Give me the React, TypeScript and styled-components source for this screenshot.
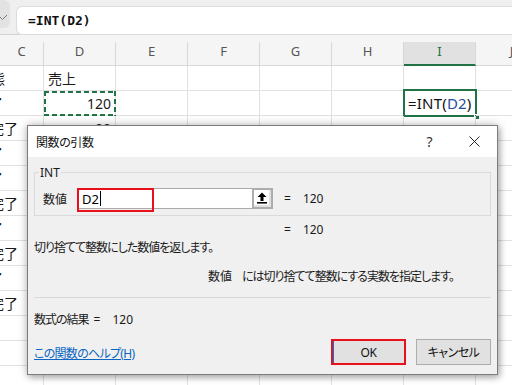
import React from "react";
import styled, { createGlobalStyle } from "styled-components";

const Global = createGlobalStyle`
  html, body { margin: 0; padding: 0; background: #fff; }
  body { width: 512px; height: 385px; overflow: hidden; }
  * { box-sizing: border-box; }
`;

const GREEN = "#217346";
const UI_FONT = `"Noto Sans", "Noto Sans CJK JP", sans-serif`;

const Screen = styled.div`
  position: relative;
  width: 512px;
  height: 385px;
  overflow: hidden;
  font-family: ${UI_FONT};
  font-feature-settings: "palt";
`;

const FormulaBar = styled.div`
  display: flex;
  gap: 6px;
  height: 35px;
  padding-top: 6px;
  background: #efefef;
  border-bottom: 1px solid #d4d4d4;
`;

const NameBox = styled.div`
  width: 10px;
  height: 28px;
  margin-top: -6px;
  padding-top: 6px;
  background: #e3e3e3;
  border-radius: 0 6px 6px 0;
  display: flex;
  align-items: center;
  overflow: hidden;
`;

const FormulaInput = styled.div`
  flex: 1;
  height: 29px;
  background: #fff;
  border: 1px solid #dcdcdc;
  border-right: none;
  border-radius: 6px 0 0 6px;
  display: flex;
  align-items: center;
  padding-left: 11px;
  font-family: "DejaVu Sans Mono", monospace;
  font-weight: bold;
  font-size: 13px;
  color: #111;
`;

const Grid = styled.div`
  display: grid;
  grid-template-columns: 44px repeat(7, 72px);
`;

const HeaderRow = styled(Grid)`
  height: 31px;
  background: #f5f5f5;
  align-items: end;
`;

const HeaderCell = styled.div<{ $active?: boolean }>`
  height: 24px;
  border-right: 1px solid #d8d8d8;
  border-bottom: ${(p) => (p.$active ? `2px solid ${GREEN}` : "1px solid #d8d8d8")};
  background: ${(p) => (p.$active ? "#e1e1e1" : "transparent")};
  color: ${(p) => (p.$active ? GREEN : "#555")};
  font-size: 13px;
  display: flex;
  justify-content: center;
  align-items: center;
  padding-bottom: 5px;
`;

const Row = styled(Grid)`
  height: 25px;
`;

const Cell = styled.div<{ $align?: "left" | "right"; $clip?: boolean }>`
  position: relative;
  height: 25px;
  border-right: 1px solid #e1e1e1;
  border-bottom: 1px solid #e1e1e1;
  font-size: 14px;
  color: #1a1a1a;
  display: flex;
  align-items: center;
  justify-content: ${(p) => (p.$align === "right" ? "flex-end" : "flex-start")};
  padding: ${(p) => (p.$clip ? "0" : "0 4px")};
  white-space: nowrap;
  overflow: ${(p) => (p.$clip ? "hidden" : "visible")};
`;

const Clipped = styled.span<{ $shift: number }>`
  margin-left: ${(p) => p.$shift}px;
  font-family: "Noto Sans CJK JP", sans-serif;
`;

const Marquee = styled.div`
  position: absolute;
  inset: 0 -1px -1px 0;
  pointer-events: none;
  background:
    repeating-linear-gradient(90deg, ${GREEN} 0 5px, transparent 5px 8px) top left / 100% 2px no-repeat,
    repeating-linear-gradient(90deg, ${GREEN} 0 5px, transparent 5px 8px) bottom left / 100% 2px no-repeat,
    repeating-linear-gradient(180deg, ${GREEN} 0 5px, transparent 5px 8px) top left / 2px 100% no-repeat,
    repeating-linear-gradient(180deg, ${GREEN} 0 5px, transparent 5px 8px) top right / 2px 100% no-repeat;
`;

const Selection = styled.div`
  position: absolute;
  top: -2px;
  left: -1px;
  right: -2px;
  bottom: -2px;
  border: 2px solid ${GREEN};
  pointer-events: none;
`;

const Handle = styled.span`
  position: absolute;
  right: -5px;
  bottom: -5px;
  width: 6px;
  height: 6px;
  background: ${GREEN};
  border: 1px solid #fff;
`;

const CellFormula = styled.span`
  font-size: 15px;
  letter-spacing: 0.2px;
  color: #111;
`;

const RefText = styled.span`
  color: #1f4e9c;
`;

/* ---------- Dialog ---------- */

const Dialog = styled.div`
  position: absolute;
  left: 27px;
  top: 125px;
  width: 471px;
  height: 250px;
  border: 1px solid #7c7c7c;
  background: #f0f0f0;
  box-shadow: 0 0 9px rgba(0, 0, 0, 0.28), 2px 3px 6px rgba(0, 0, 0, 0.2);
  display: flex;
  flex-direction: column;
  font-size: 12px;
  color: #1a1a1a;
`;

const TitleBar = styled.div`
  height: 31px;
  background: #fff;
  display: flex;
  align-items: center;
  padding-left: 8px;
`;

const Title = styled.div`
  flex: 1;
  font-size: 12px;
  letter-spacing: -0.4px;
  color: #111;
`;

const TitleButton = styled.div`
  width: 45px;
  height: 31px;
  display: flex;
  align-items: center;
  justify-content: center;
  font-size: 14px;
  color: #333;
`;

const Body = styled.div`
  flex: 1;
  display: flex;
  flex-direction: column;
  padding: 7px 6px 0 6px;
`;

const Group = styled.fieldset`
  margin: 0;
  border: 1px solid #dadada;
  padding: 7px 8px 6px 8px;
  min-width: 0;
`;

const Legend = styled.legend`
  padding: 0 1px;
  margin-left: -4px;
  font-size: 12px;
  line-height: 17px;
`;

const ArgRow = styled.div`
  display: flex;
  align-items: center;
  height: 21px;
`;

const ArgLabel = styled.div`
  width: 34px;
`;

const ArgField = styled.div`
  position: relative;
  width: 175px;
  height: 21px;
  background: #fff;
  border: 1px solid #a9a9a9;
  border-right: none;
  display: flex;
  align-items: center;
  padding-left: 4px;
  font-size: 13px;
  color: #000;
`;

const Caret = styled.span`
  display: inline-block;
  width: 1px;
  height: 15px;
  background: #000;
  margin-left: 1px;
`;

const Highlight = styled.div`
  position: absolute;
  left: -1px;
  top: -1px;
  width: 77px;
  height: 24px;
  border: 2px solid #e8101c;
  pointer-events: none;
`;

const RefButton = styled.div`
  width: 21px;
  height: 21px;
  border: 2px solid #adadad;
  background: #fff;
  box-shadow: inset -2px -2px 0 #e2e2e2;
  display: flex;
  align-items: center;
  justify-content: center;
  padding: 0 2px 2px 0;
`;

const Value = styled.div<{ $indent?: number }>`
  display: flex;
  gap: 12px;
  margin-left: ${(p) => p.$indent ?? 11}px;
  font-size: 12px;
  letter-spacing: 0;
`;

const Line = styled.div<{ $top: number; $indent?: number }>`
  margin-top: ${(p) => p.$top}px;
  padding-left: ${(p) => p.$indent ?? 0}px;
  height: 16px;
  line-height: 16px;
  display: flex;
  white-space: nowrap;
  letter-spacing: -1px;
`;

const ParamName = styled.span`
  margin-right: 10px;
  letter-spacing: 0;
`;

const Separator = styled.div`
  margin-top: 12px;
  height: 1px;
  background: #d9d9d9;
`;

const Footer = styled.div`
  margin-top: 11px;
  display: flex;
  align-items: center;
  gap: 10px;
  height: 26px;
`;

const HelpLink = styled.a`
  flex: 1;
  color: #0a66c2;
  text-decoration: underline;
  font-size: 12px;
  letter-spacing: -0.7px;
  margin-top: 1px;
`;

const Button = styled.div<{ $primary?: boolean }>`
  width: 75px;
  height: 26px;
  display: flex;
  align-items: center;
  justify-content: center;
  background: #e1e1e1;
  font-size: 12px;
  letter-spacing: -0.5px;
  color: #111;
  border: ${(p) => (p.$primary ? "2px solid #e8101c" : "1px solid #adadad")};
  box-shadow: ${(p) => (p.$primary ? "inset 1px 0 0 #0078d7" : "none")};
`;

const columns = ["C", "D", "E", "F", "G", "H", "I", "J"];

type CText = { t: string; shift: number } | null;
const cCol: CText[] = [
  { t: "態", shift: -9 },
  { t: "了", shift: -11 },
  { t: "完了", shift: -10 },
  { t: "了", shift: -11 },
  { t: "了", shift: -11 },
  { t: "完了", shift: -10 },
  { t: "了", shift: -11 },
  { t: "完了", shift: -10 },
  { t: "了", shift: -11 },
  { t: "完了", shift: -10 },
  null,
  null,
  null,
];

export default function App() {
  return (
    <Screen>
      <Global />
      <FormulaBar>
        <NameBox>
          <svg width="10" height="10" viewBox="0 0 10 10">
            <path d="M-2 3 L2.5 7.5 L7 3" stroke="#777" strokeWidth="1" fill="none" />
          </svg>
        </NameBox>
        <FormulaInput>=INT(D2)</FormulaInput>
      </FormulaBar>

      <HeaderRow>
        {columns.map((c) => (
          <HeaderCell key={c} $active={c === "I"}>
            {c}
          </HeaderCell>
        ))}
      </HeaderRow>

      {cCol.map((c, r) => (
        <Row key={r}>
          <Cell $clip>{c && <Clipped $shift={c.shift}>{c.t}</Clipped>}</Cell>
          <Cell $align={r === 0 ? "left" : "right"}>
            {r === 0 && "売上"}
            {r === 1 && (
              <>
                120
                <Marquee />
              </>
            )}
            {r === 2 && "90"}
          </Cell>
          <Cell />
          <Cell />
          <Cell />
          <Cell />
          <Cell>
            {r === 1 && (
              <>
                <CellFormula>
                  =INT(<RefText>D2</RefText>)
                </CellFormula>
                <Selection>
                  <Handle />
                </Selection>
              </>
            )}
          </Cell>
          <Cell />
        </Row>
      ))}

      <Dialog>
        <TitleBar>
          <Title>関数の引数</Title>
          <TitleButton>?</TitleButton>
          <TitleButton>
            <svg width="11" height="11" viewBox="0 0 11 11">
              <path d="M0.5 0.5 L10.5 10.5 M10.5 0.5 L0.5 10.5" stroke="#222" strokeWidth="1" />
            </svg>
          </TitleButton>
        </TitleBar>
        <Body>
          <Group>
            <Legend>INT</Legend>
            <ArgRow>
              <ArgLabel>数値</ArgLabel>
              <ArgField>
                D2
                <Caret />
                <Highlight />
              </ArgField>
              <RefButton>
                <svg width="12" height="12" viewBox="0 0 12 12">
                  <path d="M6 0.5 L1.5 5 H4.5 V9 H7.5 V5 H10.5 Z" fill="#000" />
                  <rect x="1" y="10" width="10" height="1.6" fill="#000" />
                </svg>
              </RefButton>
              <Value>
                <span>=</span>
                <span>120</span>
              </Value>
            </ArgRow>
          </Group>
          <Line $top={6} $indent={250}>
            <Value $indent={0}>
              <span>=</span>
              <span>120</span>
            </Value>
          </Line>
          <Line $top={2}>切り捨てて整数にした数値を返します。</Line>
          <Line $top={13} $indent={174}>
            <ParamName>数値</ParamName>
            <span>には切り捨てて整数にする実数を指定します。</span>
          </Line>
          <Separator />
          <Line $top={14}>
            <span>数式の結果</span>
            <Value $indent={5}>
              <span>=</span>
              <span>120</span>
            </Value>
          </Line>
          <Footer>
            <HelpLink>この関数のヘルプ(H)</HelpLink>
            <Button $primary>OK</Button>
            <Button>キャンセル</Button>
          </Footer>
        </Body>
      </Dialog>
    </Screen>
  );
}
